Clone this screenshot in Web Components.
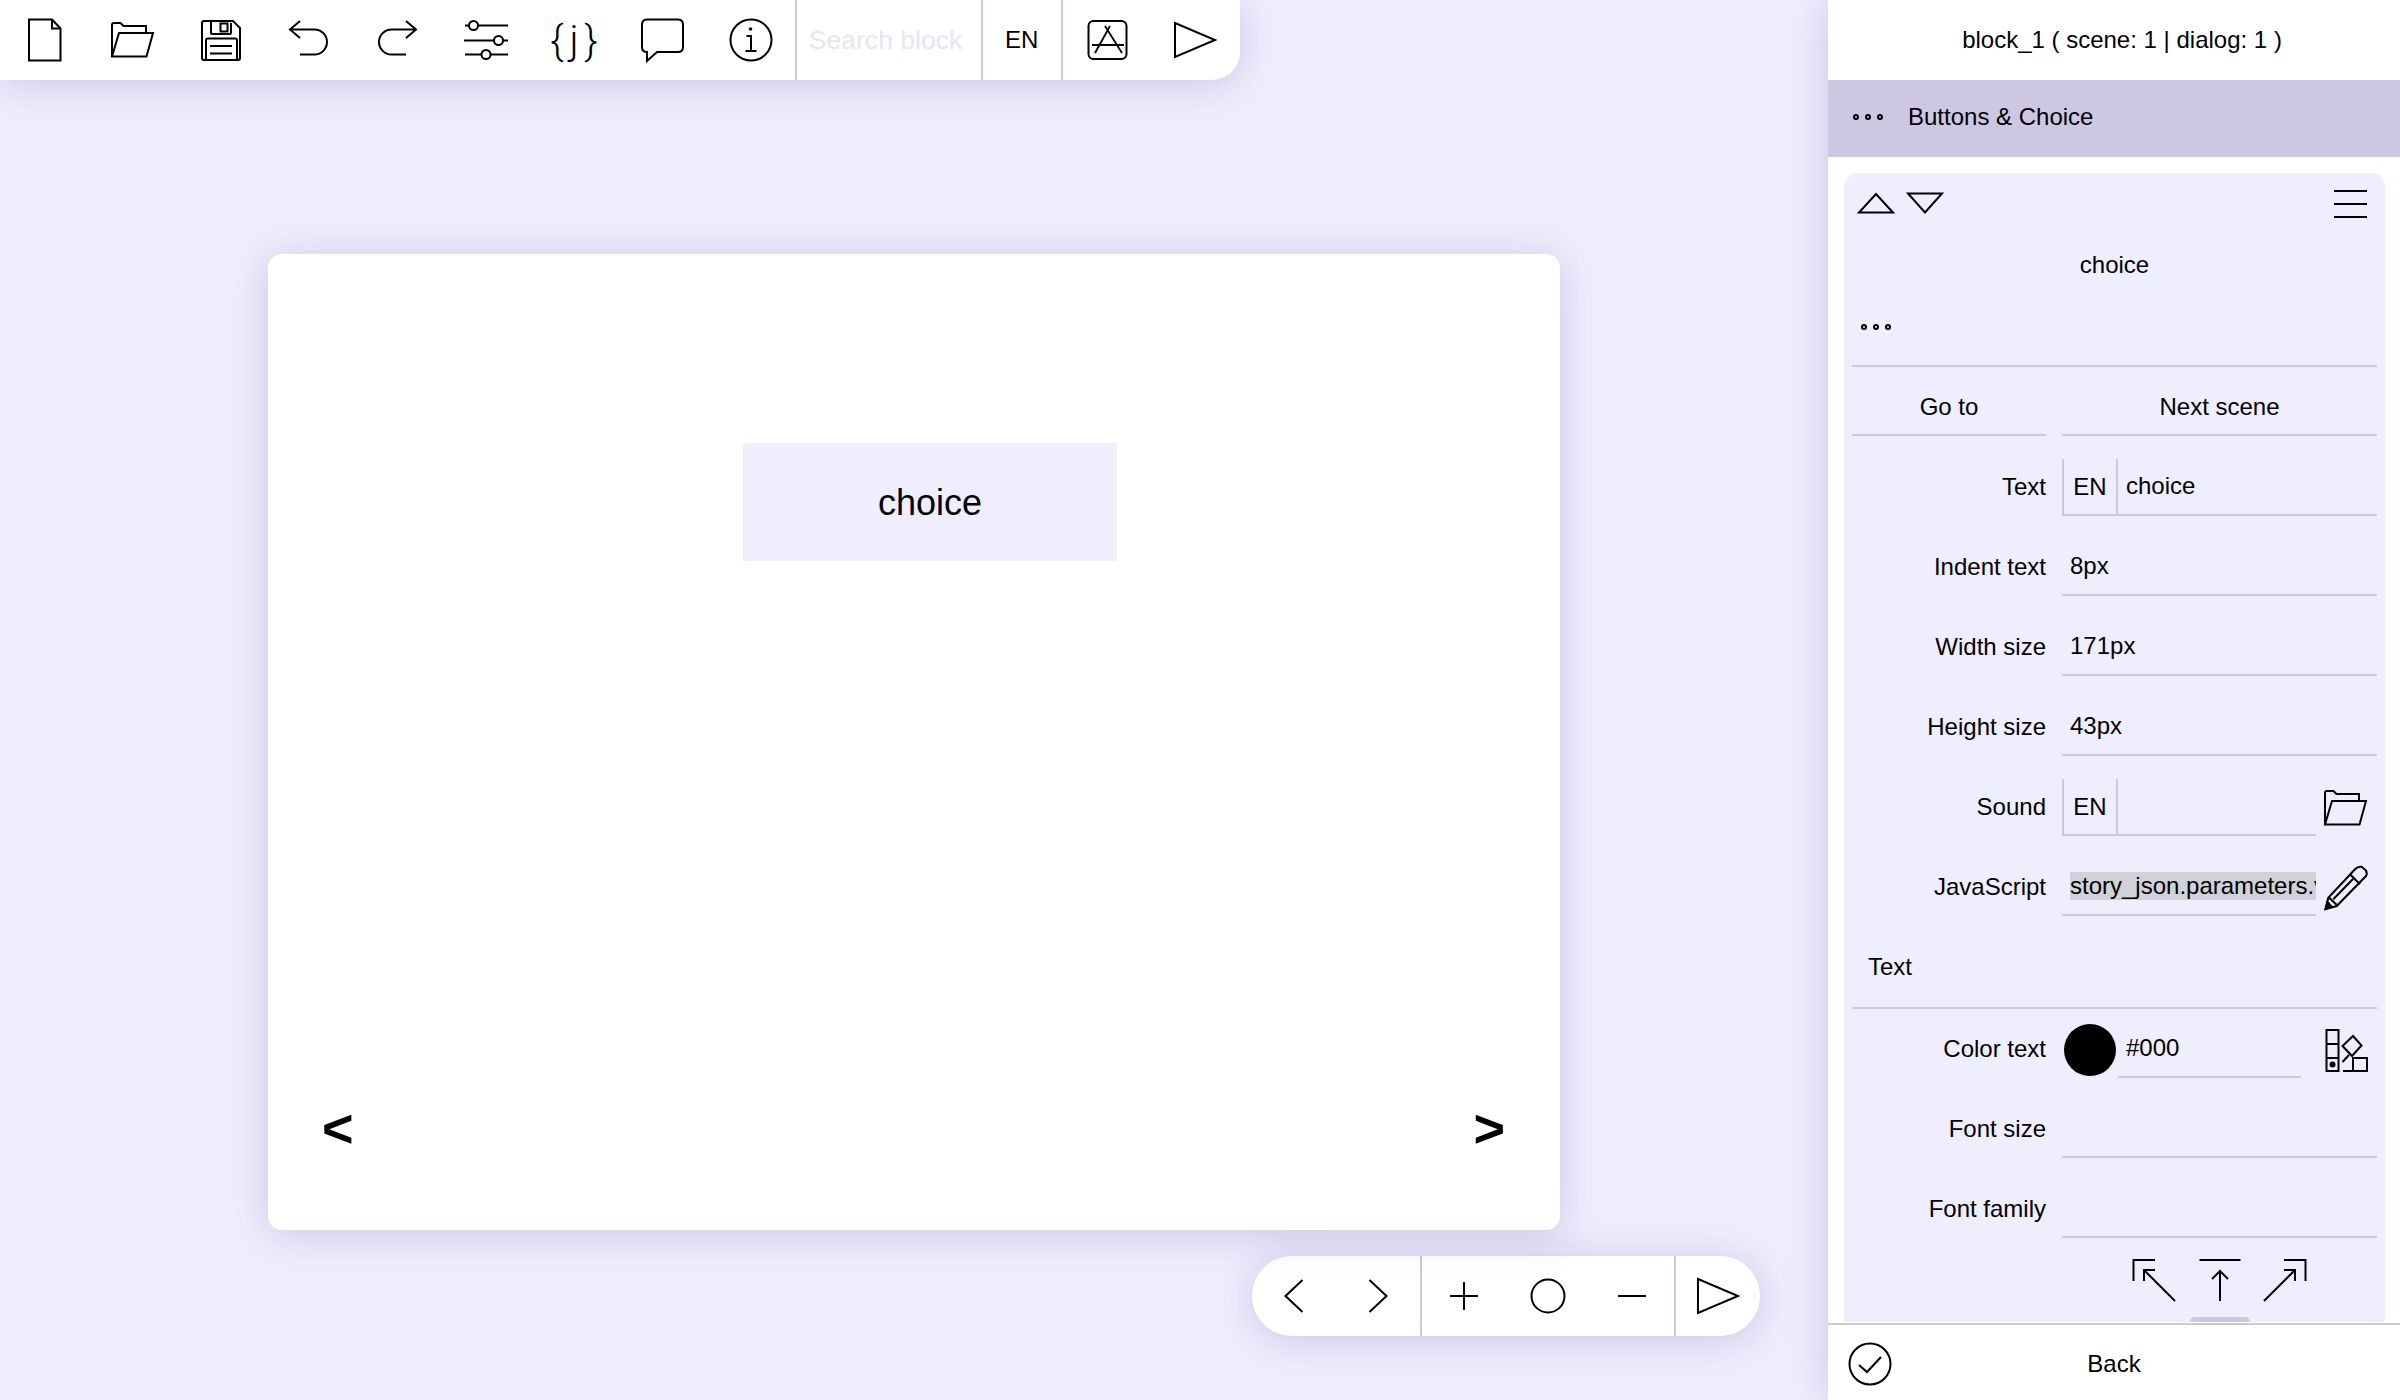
<!DOCTYPE html>
<html lang="en">
<head>
<meta charset="utf-8">
<title>Story editor</title>
<style>
  html, body { margin: 0; height: 100%; overflow: hidden; background: #efeefe; }
  body { font-family: "Liberation Sans", Arial, sans-serif; font-size: 24px; color: #000; }
</style>
</head>
<body>
<app-shell></app-shell>

<script>
const ICONS = {
  file: [44, 44, '<path d="M7 1.5H30L38.500 10.500V42.500H7Z"/><path d="M30 1.500V10.500H38.500"/>'],
  folder: [44, 44, '<path d="M2 38.500V7Q2 5 4 5H10.500L13.500 8H36V14.500"/><path d="M2 38.500H36.500L43 15H9Z"/>'],
  save: [44, 44, '<path d="M5 3H34L41 10V40Q41 42 39 42H5Q3 42 3 40V5Q3 3 5 3Z"/><path d="M12 3V15Q12 16 13 16H31Q32 16 32 15V5"/><rect x="21.500" y="5.500" width="7" height="8"/><path d="M7 42V22Q7 20.500 9 20.500H36Q38 20.500 38 22V42"/><path d="M11 28H33M11 35.500H33"/>'],
  undo: [44, 44, '<path d="M13 3L3 11.500L13 20M3 11.500H27.500A12.500 12.500 0 0 1 27.500 36.500H13"/>'],
  redo: [44, 44, '<path d="M31 3L41 11.500L31 20M41 11.500H16.500A12.500 12.500 0 0 0 16.500 36.500H31"/>'],
  sliders: [44, 44, '<path d="M1 7.500H5M14 7.500H44M0 22.500H30M39 22.500H44M1 36.500H17M27 36.500H44"/><circle cx="9.500" cy="7.500" r="4.500"/><circle cx="34.500" cy="22.500" r="4.500"/><circle cx="22" cy="36.500" r="4.500"/>'],
  braces: [44, 44, '<text x="25" y="36" text-anchor="middle" font-family="Roboto, sans-serif" font-weight="300" font-size="40" fill="#000" stroke="none" letter-spacing="6">{j}</text>'],
  chat: [44, 44, '<path d="M7 1.500H38Q43 1.500 43 6.500V29Q43 34 38 34H17L7 43V34Q2 34 2 29V6.500Q2 1.500 7 1.500Z"/>'],
  info: [44, 44, '<circle cx="22" cy="22" r="20.500"/><circle cx="21.500" cy="11" r="1.800" fill="#000" stroke="none"/><path d="M17.500 18H22V33M16.500 33H27.500"/>'],
  appstore: [44, 44, '<rect x="3.500" y="3" width="38" height="38" rx="5"/><path d="M25 8L10 35M20 8L37 35M7 27H39" stroke-width="1.800"/>'],
  play: [44, 44, '<path d="M2 5L42 22L2 39Z"/>'],
  prev: [44, 44, '<path d="M30.500 6L13.500 22L30.500 38"/>'],
  next: [44, 44, '<path d="M13.500 6L30.500 22L13.500 38"/>'],
  plus: [44, 44, '<path d="M8 22H36M22 8V36"/>'],
  ring: [44, 44, '<circle cx="22" cy="22" r="16.500"/>'],
  minus: [44, 44, '<path d="M8 22H36"/>'],
  up: [38, 22, '<path d="M2 20.500H36L19 2Z"/>'],
  down: [38, 22, '<path d="M2 1.500H36L19 20.500Z"/>'],
  menu: [34, 28, '<path d="M0 1H33M0 14H33M0 27H33"/>'],
  dots: [34, 8, '<circle cx="4" cy="4" r="2"/><circle cx="16" cy="4" r="2"/><circle cx="28" cy="4" r="2"/>'],
  pencil: [44, 44, '<path d="M0.500 43L3.300 31.700L30 3.300Q33 0 36.700 0.800L41 4.500Q42.500 8 41 10L11.700 40Z"/><path d="M25 8.300L35 18.300M3.300 31L13 40M8.300 33.300L28 13"/><path d="M0.500 43L2.500 36L7 41Z" fill="#000"/>'],
  palette: [44, 44, '<rect x="1.500" y="2" width="12" height="41"/><path d="M1.500 16H13.500M1.500 30H13.500"/><circle cx="7.500" cy="36.500" r="3" fill="#000" stroke="none"/><path d="M28 8L36.500 17.500L27 28L17.500 18Z"/><path d="M17.500 34L24 27M18 43H42V30H28V43"/>'],
  alignLeft: [44, 44, '<path d="M1.500 23V2H23M43 43L12 12M12 23V12H23"/>'],
  alignTop: [44, 44, '<path d="M1.500 2H42.500M22 43V13M14 21L22 13L30 21"/>'],
  alignRight: [44, 44, '<path d="M42.500 23V2H21M1 43L32 12M32 23V12H21"/>'],
  check: [44, 44, '<circle cx="22" cy="22" r="20.500"/><path d="M11 23L19 30L33 15"/>']
}

customElements.define('ui-icon', class extends HTMLElement {
  connectedCallback () {
    const [w, h, body] = ICONS[this.getAttribute('name')]
    this.attachShadow({ mode: 'open' }).innerHTML = `
      <style>
        :host { display: block; width: ${w}px; height: ${h}px; flex: none; }
        svg { display: block; overflow: visible; fill: none; stroke: #000; stroke-width: 2; }
      </style>
      <svg width="${w}" height="${h}" viewBox="0 0 ${w} ${h}">${body}</svg>`
  }
})

const toolbarTemplate = document.createElement('template')
toolbarTemplate.innerHTML = `
  <style>
    :host {
      display: flex; align-self: flex-start; width: 1240px; height: 80px;
      background: #fff; border-bottom-right-radius: 28px;
      box-shadow: 0 4px 40px rgba(70, 60, 130, .22);
    }
    .btn { width: 88.3px; display: flex; align-items: center; justify-content: center; }
    .end { width: 88px; }
    .sep { width: 2px; background: #cdc7e3; }
    .search { width: 172px; padding-left: 12px; display: flex; align-items: center; font-size: 26.6px; color: #e6e4f5; }
    .lang { width: 78px; display: flex; align-items: center; justify-content: center; }
  </style>
  <div class="btn"><ui-icon name="file"></ui-icon></div>
  <div class="btn"><ui-icon name="folder"></ui-icon></div>
  <div class="btn"><ui-icon name="save"></ui-icon></div>
  <div class="btn"><ui-icon name="undo"></ui-icon></div>
  <div class="btn"><ui-icon name="redo"></ui-icon></div>
  <div class="btn"><ui-icon name="sliders"></ui-icon></div>
  <div class="btn"><ui-icon name="braces"></ui-icon></div>
  <div class="btn"><ui-icon name="chat"></ui-icon></div>
  <div class="btn"><ui-icon name="info"></ui-icon></div>
  <div class="sep"></div>
  <div class="search">Search block</div>
  <div class="sep"></div>
  <div class="lang">EN</div>
  <div class="sep"></div>
  <div class="btn end"><ui-icon name="appstore"></ui-icon></div>
  <div class="btn end"><ui-icon name="play"></ui-icon></div>
`
customElements.define('tool-bar', class extends HTMLElement {
  constructor () {
    super()
    this.attachShadow({ mode: 'open' }).appendChild(toolbarTemplate.content.cloneNode(true))
  }
})

const stageTemplate = document.createElement('template')
stageTemplate.innerHTML = `
  <style>
    :host {
      display: block; position: relative; align-self: center; width: 1292px; height: 976px; margin-top: 174px;
      background: #fff; border-radius: 14px;
      box-shadow: 0 4px 40px rgba(70, 60, 130, .22);
    }
    .choice {
      position: absolute; left: 475px; top: 189px; width: 374px; height: 116px; padding-top: 2px;
      display: flex; align-items: center; justify-content: center;
      background: #efeefe; font-size: 36px;
    }
    .arrow { position: absolute; top: 842px; font-size: 54px; line-height: 64px; font-weight: bold; }
    .left { left: 54px; }
    .right { right: 55px; }
  </style>
  <div class="choice">choice</div>
  <div class="arrow left">&lt;</div>
  <div class="arrow right">&gt;</div>
`
customElements.define('story-stage', class extends HTMLElement {
  constructor () {
    super()
    this.attachShadow({ mode: 'open' }).appendChild(stageTemplate.content.cloneNode(true))
  }
})

const zoomTemplate = document.createElement('template')
zoomTemplate.innerHTML = `
  <style>
    :host {
      display: flex; align-self: flex-end; width: 508px; height: 80px; margin: 26px 68px 0 0;
      background: #fff; border-radius: 40px; overflow: hidden;
    }
    .btn { width: 84px; display: flex; align-items: center; justify-content: center; }
    .sep { width: 2px; background: #cdc7e3; }
  </style>
  <div class="btn"><ui-icon name="prev"></ui-icon></div>
  <div class="btn"><ui-icon name="next"></ui-icon></div>
  <div class="sep"></div>
  <div class="btn"><ui-icon name="plus"></ui-icon></div>
  <div class="btn"><ui-icon name="ring"></ui-icon></div>
  <div class="btn"><ui-icon name="minus"></ui-icon></div>
  <div class="sep"></div>
  <div class="btn"><ui-icon name="play"></ui-icon></div>
`
customElements.define('zoom-bar', class extends HTMLElement {
  constructor () {
    super()
    this.attachShadow({ mode: 'open' }).appendChild(zoomTemplate.content.cloneNode(true))
  }
})

// one labelled line of the property list
customElements.define('prop-row', class extends HTMLElement {
  constructor () {
    super()
    const lang = this.hasAttribute('lang-tag')
    const swatch = this.hasAttribute('swatch')
    this.attachShadow({ mode: 'open' }).innerHTML = `
      <style>
        :host { display: grid; grid-template-columns: 194px 1fr; column-gap: 16px; height: 80px; align-items: end; }
        :host([short]) { height: 69px; }
        .label { height: 55px; display: flex; align-items: center; justify-content: flex-end; padding-bottom: 2px; white-space: nowrap; }
        .value { display: flex; align-items: flex-end; min-width: 0; }
        .tag {
          box-sizing: border-box; width: 56px; height: 57px; flex: none;
          display: flex; align-items: center; justify-content: center;
          border: solid #cdc7e3; border-width: 0 2px 2px 2px;
        }
        .dot { width: 52px; height: 52px; margin: 0 2px 2px; flex: none; border-radius: 50%; background: #000; }
        .field {
          box-sizing: border-box; flex: 1; min-width: 0; height: 57px; padding: 0 0 2px 8px;
          display: flex; align-items: center;
          border-bottom: 2px solid #cdc7e3; white-space: nowrap; overflow: hidden;
        }
        .side { width: 61px; flex: none; height: 57px; display: flex; align-items: center; justify-content: center; }
        .side ui-icon[name=folder] { margin-right: 3px; }
        :host([wide-side]) .side { width: 76px; padding-left: 15px; box-sizing: border-box; }
      </style>
      <div class="label">${this.getAttribute('label')}</div>
      <div class="value">
        ${lang ? '<div class="tag">EN</div>' : ''}
        ${swatch ? '<div class="dot"></div>' : ''}
        <div class="field"><slot></slot></div>
        ${this.hasAttribute('icon') ? `<div class="side"><ui-icon name="${this.getAttribute('icon')}"></ui-icon></div>` : ''}
      </div>`
  }
})

const cardTemplate = document.createElement('template')
cardTemplate.innerHTML = `
  <style>
    :host { display: block; box-sizing: border-box; padding: 0 8px; background: #efeefe; border-radius: 14px 14px 0 0; position: relative; height: 1149px; }
    .head { display: flex; align-items: flex-start; height: 64px; padding-top: 17px; box-sizing: border-box; }
    .head ui-icon[name=up] { margin: 2px 0 0 5px; }
    .head ui-icon[name=down] { margin: 2px 0 0 11px; }
    .head ui-icon[name=menu] { margin: 0 9px 0 auto; }
    .title { height: 56px; display: flex; align-items: center; justify-content: center; }
    .more { height: 74px; box-sizing: border-box; padding: 30px 0 0 8px; border-bottom: 2px solid #cdc7e3; }
    .goto { display: grid; grid-template-columns: 194px 1fr; column-gap: 16px; height: 69px; align-items: end; }
    .goto div { box-sizing: border-box; height: 57px; display: flex; align-items: center; justify-content: center; border-bottom: 2px solid #cdc7e3; }
    .section { box-sizing: border-box; height: 93px; padding: 32px 0 0 16px; border-bottom: 2px solid #cdc7e3; line-height: 38px; }
    .js { display: block; width: 246px; height: 28px; line-height: 28px; background: #d1d1d9; overflow: hidden; }
    .align { display: flex; justify-content: center; gap: 21.5px; margin-left: 210px; padding-top: 20px; }
    .handle { position: absolute; left: 346px; bottom: 0; width: 60px; height: 5px; background: #cdc7e3; border-radius: 8px 8px 0 0; }
  </style>
  <div class="head"><ui-icon name="up"></ui-icon><ui-icon name="down"></ui-icon><ui-icon name="menu"></ui-icon></div>
  <div class="title">choice</div>
  <div class="more"><ui-icon name="dots"></ui-icon></div>
  <div class="goto"><div>Go to</div><div>Next scene</div></div>
  <prop-row label="Text" lang-tag>choice</prop-row>
  <prop-row label="Indent text">8px</prop-row>
  <prop-row label="Width size">171px</prop-row>
  <prop-row label="Height size">43px</prop-row>
  <prop-row label="Sound" lang-tag icon="folder"></prop-row>
  <prop-row label="JavaScript" icon="pencil"><span class="js">story_json.parameters.v</span></prop-row>
  <div class="section">Text</div>
  <prop-row label="Color text" swatch short icon="palette" wide-side>#000</prop-row>
  <prop-row label="Font size"></prop-row>
  <prop-row label="Font family"></prop-row>
  <div class="align"><ui-icon name="alignLeft"></ui-icon><ui-icon name="alignTop"></ui-icon><ui-icon name="alignRight"></ui-icon></div>
  <div class="handle"></div>
`
customElements.define('choice-card', class extends HTMLElement {
  constructor () {
    super()
    this.attachShadow({ mode: 'open' }).appendChild(cardTemplate.content.cloneNode(true))
  }
})

const panelTemplate = document.createElement('template')
panelTemplate.innerHTML = `
  <style>
    :host {
      display: flex; flex-direction: column; flex: none; width: 572px; height: 1400px;
      background: #fff; box-shadow: 0 0 40px rgba(70, 60, 130, .22);
    }
    .top { height: 80px; flex: none; padding-left: 16px; display: flex; align-items: center; justify-content: center; }
    .band { height: 77px; flex: none; box-sizing: border-box; padding: 0 0 3px 24px; display: flex; align-items: center; gap: 22px; background: #cdc7e3; }
    .scroll { flex: 1; min-height: 0; overflow: hidden; padding: 16px 15px 0 16px; }
    .foot { height: 77px; flex: none; box-sizing: border-box; padding-top: 2px; border-top: 2px solid #cdc7e3; position: relative; display: flex; align-items: center; justify-content: center; }
    .foot ui-icon { position: absolute; left: 20px; top: 17px; }
  </style>
  <div class="top">block_1 ( scene: 1 | dialog: 1 )</div>
  <div class="band"><ui-icon name="dots"></ui-icon><span>Buttons &amp; Choice</span></div>
  <div class="scroll"><choice-card></choice-card></div>
  <div class="foot"><ui-icon name="check"></ui-icon>Back</div>
`
customElements.define('side-panel', class extends HTMLElement {
  constructor () {
    super()
    this.attachShadow({ mode: 'open' }).appendChild(panelTemplate.content.cloneNode(true))
  }
})

const shellTemplate = document.createElement('template')
shellTemplate.innerHTML = `
  <style>
    :host { display: flex; width: 2400px; height: 1400px; overflow: hidden; background: #efeefe; }
    main { flex: 1; min-width: 0; display: flex; flex-direction: column; }
    zoom-bar { box-shadow: 0 4px 40px rgba(70, 60, 130, .22); }
  </style>
  <main>
    <tool-bar></tool-bar>
    <story-stage></story-stage>
    <zoom-bar></zoom-bar>
  </main>
  <side-panel></side-panel>
`
customElements.define('app-shell', class extends HTMLElement {
  constructor () {
    super()
    this.attachShadow({ mode: 'open' }).appendChild(shellTemplate.content.cloneNode(true))
  }
})
</script>
</body>
</html>
